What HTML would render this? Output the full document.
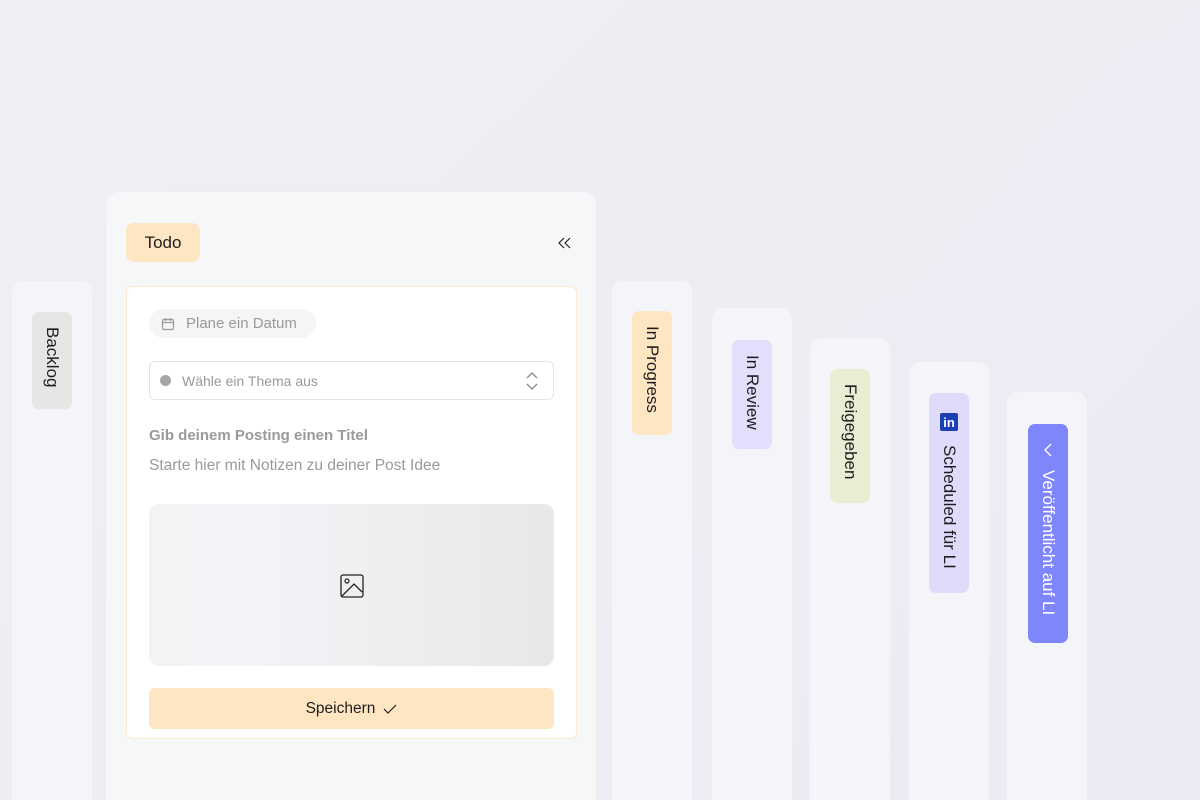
<!DOCTYPE html>
<html style="width:1200px;height:800px;overflow:hidden"><head><meta charset="utf-8"><style>
*{box-sizing:border-box;margin:0;padding:0}
body{width:1200px;height:800px;overflow:hidden;position:relative;font-family:"Liberation Sans",sans-serif;background:linear-gradient(135deg,#eef0f5 0%,#eceef4 50%,#ebebf3 100%)}
.col{position:absolute;width:82px;bottom:0;background:#f4f5f8;border-radius:12px 12px 0 0;border:1px solid #eceef2;border-bottom:none}
.pill{position:absolute;width:40px;border-radius:7px;writing-mode:vertical-rl;font-size:17px;color:#1d1d1f;display:flex;align-items:center;justify-content:flex-start;padding-top:15px}
.todo{position:absolute;left:105px;top:191px;width:492px;bottom:0;background:#f6f7f9;border-radius:14px 14px 0 0;border:1px solid #eceef2;border-bottom:none}
</style></head><body>
<div class="col" style="left:11px;top:280px"></div>
<div class="pill" style="left:32px;top:312px;height:97px;background:#e6e6e4">Backlog</div>

<div class="todo"></div>
<div style="position:absolute;left:126px;top:223px;width:74px;height:39px;background:#fee6c2;border-radius:8px;font-size:17px;color:#1d1d1f;display:flex;align-items:center;justify-content:center">Todo</div>
<svg width="14" height="12" viewBox="0 0 14 12" style="position:absolute;left:558px;top:237px"><path d="M6 1L1 6l5 5M12 1L7 6l5 5" fill="none" stroke="#222" stroke-width="1.2"/></svg>

<div style="position:absolute;left:126px;top:286px;width:451px;height:453px;background:#fff;border:1.5px solid #fbeacb;border-radius:6px"></div>
<div style="position:absolute;left:149px;top:309px;width:167px;height:29px;background:#f5f5f6;border-radius:15px;display:flex;align-items:center;padding-left:12px;font-size:15px;color:#9a9a9a">
<svg width="14" height="14" viewBox="0 0 14 14" style="margin-right:11px"><rect x="1.5" y="2.5" width="11" height="10" rx="1.5" fill="none" stroke="#999" stroke-width="1.2"/><path d="M1.5 5.5h11M4.5 1v3M9.5 1v3" stroke="#999" stroke-width="1.2"/></svg>Plane ein Datum</div>
<div style="position:absolute;left:149px;top:361px;width:405px;height:39px;border:1.5px solid #e4e4e6;border-radius:6px;display:flex;align-items:center;padding-left:10px;font-size:14px;color:#999">
<span style="width:11px;height:11px;border-radius:50%;background:#a5a5a5;margin-right:11px"></span>Wähle ein Thema aus
<svg width="14" height="20" viewBox="0 0 14 20" style="position:absolute;right:14px;top:9px"><path d="M2 7l5-5 5 5M2 13l5 5 5-5" fill="none" stroke="#888" stroke-width="1.3"/></svg></div>
<div style="position:absolute;left:149px;top:427px;font-size:15px;font-weight:bold;color:#9a9a9a">Gib deinem Posting einen Titel</div>
<div style="position:absolute;left:149px;top:457px;font-size:15.5px;color:#9a9a9a">Starte hier mit Notizen zu deiner Post Idee</div>
<div style="position:absolute;left:149px;top:504px;width:405px;height:162px;border-radius:10px;background:linear-gradient(90deg,#f3f3f6 0%,#f3f4f7 25%,#eeeef0 60%,#e8e8e9 100%)">
<svg width="24" height="24" viewBox="0 0 24 24" style="position:absolute;left:191px;top:70px"><rect x="1" y="1" width="22" height="22" rx="2" fill="none" stroke="#222" stroke-width="1.3"/><circle cx="7" cy="7" r="2" fill="none" stroke="#222" stroke-width="1.2"/><path d="M2 22L14 10l8 8" fill="none" stroke="#222" stroke-width="1.3"/></svg></div>
<div style="position:absolute;left:149px;top:688px;width:405px;height:41px;background:#fee6c2;border-radius:6px;display:flex;align-items:center;justify-content:center;font-size:15.5px;color:#1d1d1f">Speichern
<svg width="14" height="12" viewBox="0 0 14 12" style="margin-left:8px"><path d="M1 6l4 4 8-8" fill="none" stroke="#222" stroke-width="1.2"/></svg></div>

<div class="col" style="left:611px;top:280px"></div>
<div class="pill" style="left:632px;top:311px;height:124px;background:#fee6c2">In Progress</div>
<div class="col" style="left:711px;top:307px"></div>
<div class="pill" style="left:732px;top:340px;height:109px;background:#e2defb">In Review</div>
<div class="col" style="left:809px;top:337px"></div>
<div class="pill" style="left:830px;top:369px;height:134px;background:#e9edd4">Freigegeben</div>
<div class="col" style="left:908px;top:361px"></div>
<div class="pill" style="left:929px;top:393px;height:200px;background:#dfdbfb;padding-top:20px">
<span style="writing-mode:horizontal-tb;width:18px;height:18px;background:#1d3fb5;color:#fff;font-size:13px;font-weight:bold;border-radius:2px;display:flex;align-items:center;justify-content:center;margin-bottom:14px">in</span>Scheduled für LI</div>
<div class="col" style="left:1006px;top:391px"></div>
<div class="pill" style="left:1028px;top:424px;height:219px;background:#7f85fa;color:#fff;padding-top:18px">
<svg width="16" height="16" viewBox="0 0 16 16" style="margin-bottom:12px"><path d="M11 2L5 8l6 6" fill="none" stroke="#fff" stroke-width="1.3"/></svg>Veröffentlicht auf LI</div>
</body></html>
